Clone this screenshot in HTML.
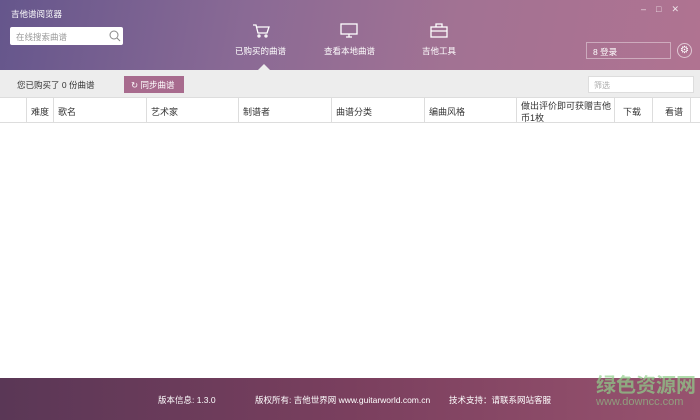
<!DOCTYPE html><html><head><meta charset="utf-8"><style>
*{margin:0;padding:0;box-sizing:border-box}
body{width:700px;height:420px;overflow:hidden;font-family:"Liberation Sans","Noto Sans CJK SC",sans-serif;font-size:9px;color:#333;background:#fff;position:relative}
.hdr{position:absolute;left:0;top:0;width:700px;height:70px;background:linear-gradient(100deg,#65568c 0%,#8a6a95 35%,#a27293 65%,#b07391 100%)}
.w{color:#fff;position:absolute}
.tb{position:absolute;top:70px;left:0;width:700px;height:27px;background:#ededed}
.th{position:absolute;top:97px;left:0;width:700px;height:26px;border-top:1px solid #ddd;border-bottom:1px solid #ddd;background:#fff}
.c{position:absolute;top:0;height:24px;border-left:1px solid #ddd;padding:7px 0 0 4px;color:#333}
.ft{position:absolute;left:0;top:378px;width:700px;height:42px;background:linear-gradient(90deg,#5a3756,#7a3f5e 50%,#98536f)}
.ft span{position:absolute;top:16px;color:#fff;font-size:8.5px}
</style></head><body>
<div class="hdr">
<div class="w" style="left:11px;top:8px;font-size:8.5px">吉他谱阅览器</div>
<div style="position:absolute;left:10px;top:27px;width:113px;height:18px;background:#fff;border-radius:2px"><span style="position:absolute;left:6px;top:4px;color:#999;font-size:8.5px">在线搜索曲谱</span>
<svg style="position:absolute;left:99px;top:3px" width="12" height="12"><circle cx="5" cy="5" r="4" fill="none" stroke="#888" stroke-width="1"/><line x1="8" y1="8" x2="11" y2="11" stroke="#888"/></svg></div>
<svg style="position:absolute;left:252px;top:23px" width="18" height="15" fill="none" stroke="#fff" stroke-width="1.3"><path d="M1 2h3l2 8h9l2-6H5"/><circle cx="7" cy="13" r="1"/><circle cx="14" cy="13" r="1"/></svg>
<div class="w" style="left:235px;top:45px;font-size:8.5px">已购买的曲谱</div>
<svg style="position:absolute;left:340px;top:23px" width="18" height="15" fill="none" stroke="#fff" stroke-width="1.3"><rect x="1" y="1" width="16" height="10"/><path d="M6 14h6M9 11v3"/></svg>
<div class="w" style="left:324px;top:45px;font-size:8.5px">查看本地曲谱</div>
<svg style="position:absolute;left:430px;top:23px" width="18" height="15" fill="none" stroke="#fff" stroke-width="1.3"><rect x="1" y="4" width="16" height="10"/><path d="M6 4V1h6v3M1 8h16"/></svg>
<div class="w" style="left:422px;top:45px;font-size:8.5px">吉他工具</div>
<div style="position:absolute;left:258px;top:64px;width:0;height:0;border:6px solid transparent;border-bottom-color:#ededed;border-top:0"></div>
<div class="w" style="left:641px;top:4px;font-size:9px;opacity:.8">–&nbsp;&nbsp;&nbsp;&nbsp;□&nbsp;&nbsp;&nbsp;&nbsp;✕</div>
<div style="position:absolute;left:586px;top:42px;width:85px;height:17px;border:1px solid rgba(255,255,255,.4)"><span class="w" style="left:6px;top:3px;font-size:8.5px">8 登录</span></div>
<div style="position:absolute;left:677px;top:43px;width:15px;height:15px;border-radius:50%;border:1px solid rgba(255,255,255,.6);color:#fff;text-align:center;font-size:10px;line-height:13px">⚙</div>
</div>
<div class="tb">
<span style="position:absolute;left:17px;top:9px;font-size:8.5px">您已购买了 0 份曲谱</span>
<div style="position:absolute;left:124px;top:6px;width:60px;height:17px;background:#a86b8e;color:#fff;padding:3px 0 0 7px;font-size:8.5px">↻ 同步曲谱</div>
<div style="position:absolute;left:588px;top:6px;width:106px;height:17px;background:#fff;border:1px solid #ddd;color:#aaa;padding:3px 0 0 5px;font-size:8px">筛选</div>
</div>
<div class="th">
<div class="c" style="left:26px">难度</div><div class="c" style="left:53px">歌名</div><div class="c" style="left:146px">艺术家</div><div class="c" style="left:238px">制谱者</div><div class="c" style="left:331px">曲谱分类</div><div class="c" style="left:424px">编曲风格</div><div class="c" style="left:516px;padding-top:2px;line-height:12px;width:98px">做出评价即可获赠吉他币1枚</div><div class="c" style="left:614px;padding-left:8px">下载</div><div class="c" style="left:652px;padding-left:12px">看谱</div><div class="c" style="left:690px"></div>
</div>
<div class="ft"><span style="left:158px">版本信息: 1.3.0</span><span style="left:255px">版权所有: 吉他世界网 www.guitarworld.com.cn</span><span style="left:449px">技术支持：请联系网站客服</span>
<span style="left:596px;top:-9px;font-size:20px;font-weight:bold;color:#8fcf8a;opacity:.7">绿色资源网</span>
<span style="left:596px;top:18px;font-size:11px;color:#8fcf8a;opacity:.6">www.downcc.com</span></div>
</body></html>
